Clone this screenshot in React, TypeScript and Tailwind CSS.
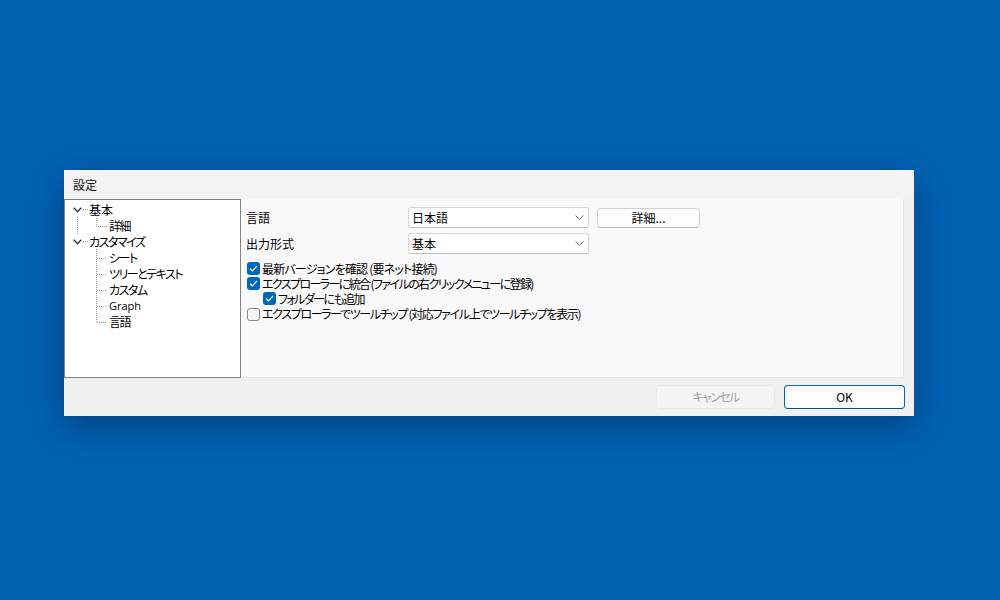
import React from "react";

const FONT = { fontFamily: '"Noto Sans CJK JP", "Noto Sans", sans-serif' };

function Chevron() {
  return (
    <svg width="9" height="6" viewBox="0 0 9 6" className="shrink-0">
      <path d="M0.8 0.8 L4.5 4.6 L8.2 0.8" fill="none" stroke="#222" strokeWidth="1.3" />
    </svg>
  );
}

function SmallChevron() {
  return (
    <svg width="9" height="5" viewBox="0 0 9 5">
      <path d="M0.5 0.5 L4.5 4.3 L8.5 0.5" fill="none" stroke="#666" strokeWidth="1" />
    </svg>
  );
}

function Check({ checked }: { checked: boolean }) {
  if (!checked) {
    return (
      <span className="w-[13px] h-[13px] rounded-[3px] border border-[#8a8a8a] bg-[#f6f6f6] shrink-0 box-border" />
    );
  }
  return (
    <span className="w-[13px] h-[13px] rounded-[3px] bg-[#0067c0] shrink-0 flex items-center justify-center">
      <svg width="9" height="7" viewBox="0 0 9 7">
        <path d="M1 3.6 L3.3 5.8 L8 1" fill="none" stroke="#fff" strokeWidth="1.2" />
      </svg>
    </span>
  );
}

function Select({ value }: { value: string }) {
  return (
    <div className="w-[181px] h-[21px] bg-white border border-[#d5d5d5] border-b-[#bdbdbd] rounded-[3px] flex items-center justify-between pl-[3px] pr-[4px] box-border">
      <span className="text-[12px] leading-none text-black">{value}</span>
      <SmallChevron />
    </div>
  );
}

export default function App() {
  const child = (label: string, latin = false) => (
    <div
      className="h-[16px] flex items-center pl-[44px] text-[12px] leading-[16px] text-black tracking-[-1.5px]"
      style={latin ? { fontFamily: '"Open Sans", "Noto Sans", sans-serif', fontSize: 11, letterSpacing: 0 } : undefined}
    >
      {label}
    </div>
  );
  return (
    <div className="w-[1000px] h-[600px] bg-[#0263b3] pt-[170px] pl-[64px] box-border [font-feature-settings:'palt']" style={FONT}>
      <div className="w-[850px] h-[246px] bg-[#f0f0f0] flex flex-col shadow-[0_10px_35px_rgba(0,20,60,0.45)]">
        <div className="h-[29px] flex items-center pl-[9px] text-[12px] text-[#111] bg-[#f3f3f3]">設定</div>
        <div className="h-[179px] flex">
          <div className="w-[177px] h-full bg-white border border-[#828282] box-border relative pt-[2px]">
            <svg className="absolute left-0 top-0" width="60" height="178">
              <g stroke="#9a9a9a" strokeWidth="1" strokeDasharray="1 1" fill="none">
                <path d="M12.5 17 V 34" />
                <path d="M18 9.5 H 23" />
                <path d="M18 41.5 H 23" />
                <path d="M31.5 18 V 26.5 H 42" />
                <path d="M31.5 49 V 122.5" />
                <path d="M32 58.5 H 42" />
                <path d="M32 74.5 H 42" />
                <path d="M32 90.5 H 42" />
                <path d="M32 106.5 H 42" />
                <path d="M32 122.5 H 42" />
              </g>
            </svg>
            <div className="relative">
              <div className="h-[16px] flex items-center pl-[8px] text-[12px] leading-[16px] text-black">
                <Chevron />
                <span className="ml-[7px]">基本</span>
              </div>
              {child("詳細")}
              <div className="h-[16px] flex items-center pl-[8px] text-[12px] leading-[16px] text-black">
                <Chevron />
                <span className="ml-[7px] tracking-[-1.5px]">カスタマイズ</span>
              </div>
              {child("シート")}
              {child("ツリーとテキスト")}
              {child("カスタム")}
              {child("Graph", true)}
              {child("言語")}
            </div>
          </div>
          <div className="w-[663px] h-full bg-[#f9f9f9] border-r border-b border-[#e6e6e6] box-border pl-[5px] pt-[8px] flex flex-col">
            <div className="flex items-center h-[21px]">
              <span className="w-[162px] text-[12px] text-black">言語</span>
              <Select value="日本語" />
              <div className="ml-[8px] w-[103px] h-[20px] bg-[#fdfdfd] border border-[#d0d0d0] border-b-[#b8b8b8] rounded-[4px] flex items-center justify-center text-[12px] text-black box-border">
                詳細...
              </div>
            </div>
            <div className="flex items-center h-[21px] mt-[5px]">
              <span className="w-[162px] text-[12px] text-black">出力形式</span>
              <Select value="基本" />
            </div>
            <div className="mt-[7px] flex flex-col">
              <div className="h-[15px] flex items-center gap-[2px] pl-[1px] text-[12px] text-black whitespace-nowrap">
                <Check checked />
                <span className="tracking-[-0.8px]">最新バージョンを確認 (要ネット接続)</span>
              </div>
              <div className="h-[15px] flex items-center gap-[2px] pl-[1px] text-[12px] text-black whitespace-nowrap">
                <Check checked />
                <span className="tracking-[-1.6px]">エクスプローラーに統合 (ファイルの右クリックメニューに登録)</span>
              </div>
              <div className="h-[15px] flex items-center gap-[2px] pl-[17px] text-[12px] text-black whitespace-nowrap">
                <Check checked />
                <span className="tracking-[-1.6px]">フォルダーにも追加</span>
              </div>
              <div className="h-[16px] flex items-center gap-[2px] pl-[1px] text-[12px] text-black whitespace-nowrap">
                <Check checked={false} />
                <span className="tracking-[-1.35px]">エクスプローラーでツールチップ (対応ファイル上でツールチップを表示)</span>
              </div>
            </div>
          </div>
        </div>
        <div className="flex-1 flex items-center justify-end pr-[9px] gap-[9px]">
          <div className="w-[119px] h-[24px] bg-[#f5f5f5] border border-[#e8e8e8] rounded-[4px] flex items-center justify-center text-[12px] text-[#a0a0a0] tracking-[-1.6px] box-border">
            キャンセル
          </div>
          <div className="w-[121px] h-[24px] bg-[#fdfdfd] border border-[#0067c0] border-b-[#00509a] rounded-[4px] flex items-center justify-center text-[12px] text-black box-border">
            OK
          </div>
        </div>
      </div>
    </div>
  );
}
